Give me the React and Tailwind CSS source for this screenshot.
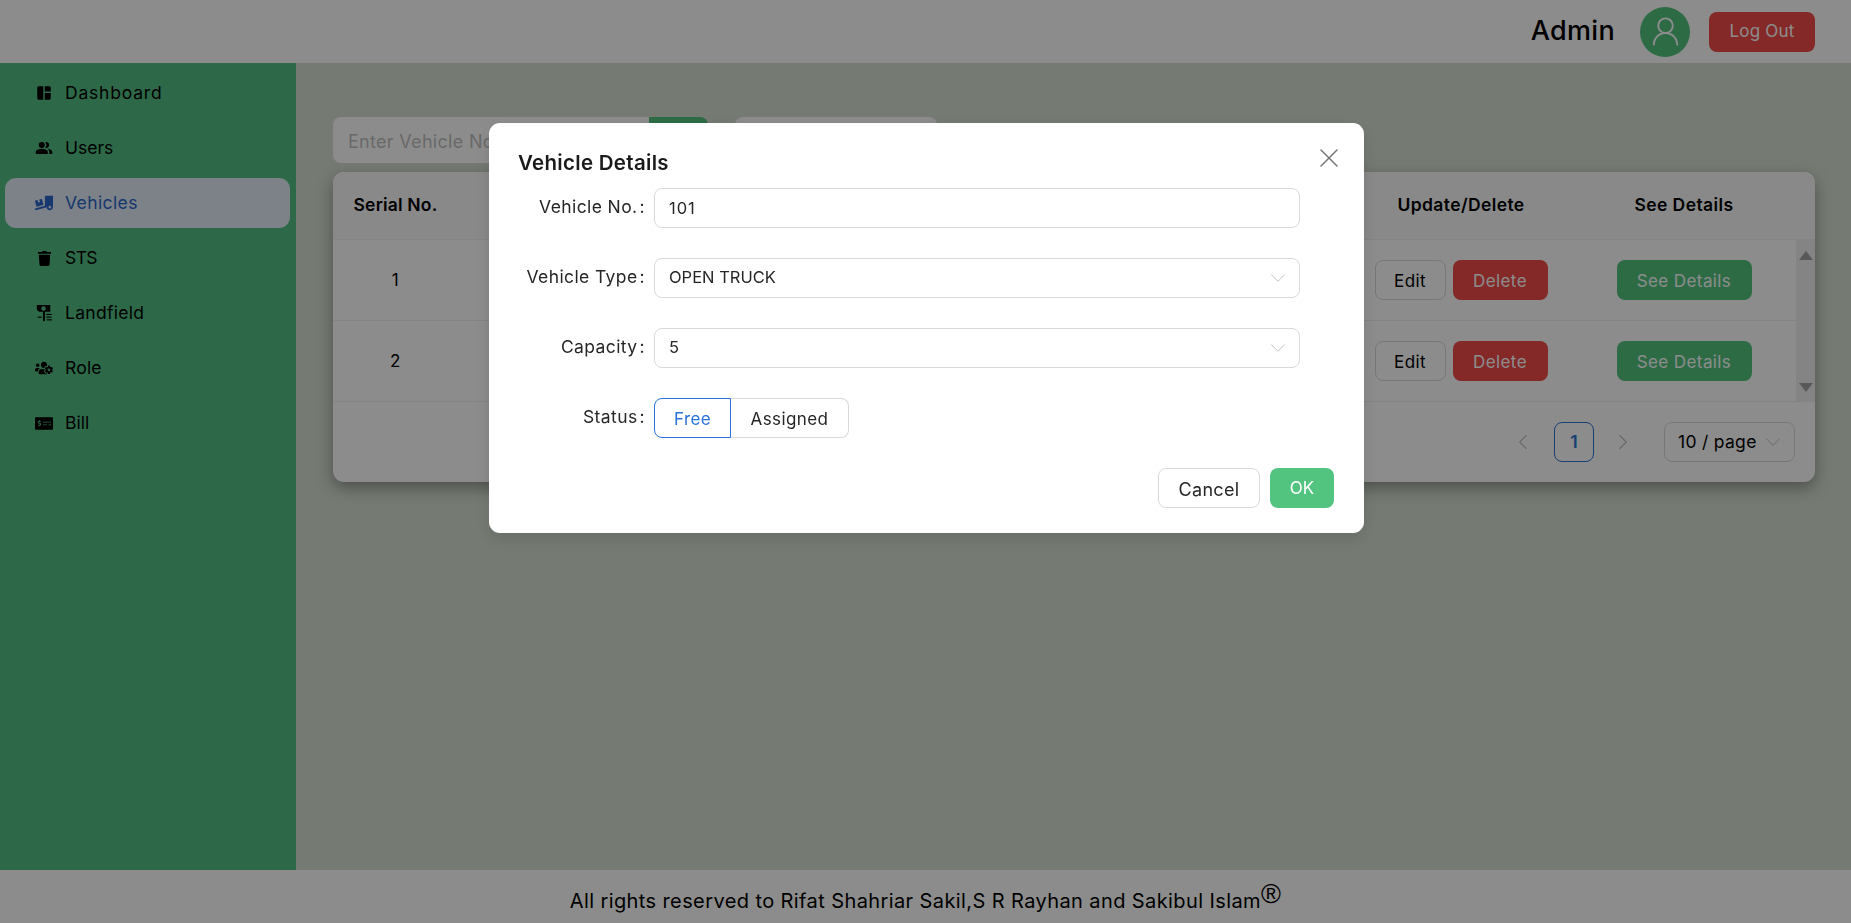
import { X, ChevronDown, ChevronLeft, ChevronRight, UserRound } from 'lucide-react';
import { MdSpaceDashboard, MdPeopleAlt } from 'react-icons/md';
import { FaTruckLoading, FaTrash, FaUsersCog, FaMoneyCheckAlt } from 'react-icons/fa';

const LandfieldIcon = ({ className }) => (
    <svg viewBox="0 0 20 20" className={className} fill="currentColor" fillRule="evenodd">
        <path d="M2 1h15v7.500h-6V11H9V8.500H4.500L2 6zM9.500 2.500a2.500 2.500 0 1 0 0.010 0z" />
        <rect x="9" y="11" width="2" height="8" />
        <rect x="12.500" y="11" width="6" height="1.200" />
        <rect x="12.500" y="14" width="6" height="1.200" />
        <rect x="13" y="17" width="6" height="1.200" />
        <rect x="3" y="14" width="4.500" height="1.200" />
    </svg>
);

const navItems = [
    { label: 'Dashboard', icon: MdSpaceDashboard, size: 'text-[20px]', tracking: 'tracking-[0.8px]' },
    { label: 'Users', icon: MdPeopleAlt, size: 'text-[20px]', tracking: 'tracking-[0px]' },
    { label: 'Vehicles', icon: FaTruckLoading, active: true, size: 'text-[18px]', tracking: 'tracking-[0.4px]' },
    { label: 'STS', icon: FaTrash, size: 'text-[15px]', tracking: 'tracking-[-0.6px]' },
    { label: 'Landfield', icon: LandfieldIcon, size: 'w-[18px] h-[18px]', tracking: 'tracking-[0.3px]' },
    { label: 'Role', icon: FaUsersCog, size: 'text-[18px]', tracking: 'tracking-[0.2px]' },
    { label: 'Bill', icon: FaMoneyCheckAlt, size: 'text-[19px]', tracking: 'tracking-[0px]' },
];

const Sidebar = () => (
    <aside className="w-[296px] shrink-0 bg-[#52bf83] pl-[5px] pr-[6px] pt-[5px]">
        <ul className="flex flex-col gap-[5px]">
            {navItems.map((item) => (
                <li
                    key={item.label}
                    className={`h-[50px] rounded-[11px] flex items-center pl-[30px] text-[17.5px] ${item.tracking} ${
                        item.active ? 'bg-[#e3ecf7] text-[#2a66c8]' : 'text-black'
                    }`}
                >
                    <span className="w-[30px] flex justify-start">
                        <span className="w-[18px] flex justify-center">
                            <item.icon className={item.size} />
                        </span>
                    </span>
                    {item.label}
                </li>
            ))}
        </ul>
    </aside>
);

const VehicleRow = ({ serial }) => (
    <div className="flex h-[81px] items-center border-b border-[#f0f0f0] text-[17px] tracking-[0.4px]">
        <div className="w-[125px] text-center pt-[2px]">{serial}</div>
        <div className="flex-1" />
        <div className="w-[222px] flex justify-center gap-[7px]">
            <button className="w-[71px] h-[40px] pt-[3px] rounded-[8px] border border-[#d9d9d9] bg-white">Edit</button>
            <button className="w-[95px] h-[40px] pt-[3px] rounded-[8px] bg-[#f04a4a] text-white">Delete</button>
        </div>
        <div className="w-[224px] flex justify-center">
            <button className="w-[135px] h-[40px] pt-[3px] rounded-[8px] bg-[#52c47f] text-white">See Details</button>
        </div>
    </div>
);

const VehicleTable = () => (
    <div className="h-[310px] rounded-[11px] bg-white shadow-[0_6px_16px_rgba(0,0,0,0.35)] overflow-hidden">
        <div className="flex h-[68px] items-center font-semibold text-[17.5px] tracking-[0.4px] bg-[#fafafa] border-b border-[#f0f0f0] pr-[19px]">
            <div className="w-[125px] text-center tracking-[0.2px]">Serial No.</div>
            <div className="flex-1" />
            <div className="w-[222px] text-center">Update/Delete</div>
            <div className="w-[224px] text-center">See Details</div>
        </div>
        <div className="flex h-[162px]">
            <div className="flex-1">
                <VehicleRow serial="1" />
                <VehicleRow serial="2" />
            </div>
            <div className="w-[19px] bg-[#f1f1f1] flex flex-col items-center justify-between pt-[11px] pb-[10px]">
                <span className="w-0 h-0 border-x-[7px] border-x-transparent border-b-[9px] border-b-[#a3a3a3]" />
                <span className="w-0 h-0 border-x-[7px] border-x-transparent border-t-[9px] border-t-[#a3a3a3]" />
            </div>
        </div>
        <div className="flex items-center justify-end h-[80px] pr-[20px] text-[17.5px] tracking-[0.3px]">
            <ChevronLeft className="w-[26px] h-[26px] text-[#bfbfbf] mr-[18px]" strokeWidth={1} />
            <div className="w-[40px] h-[40px] rounded-[8px] border border-[#2a72d8] text-[#2a72d8] font-semibold flex items-center justify-center">
                1
            </div>
            <ChevronRight className="w-[26px] h-[26px] text-[#bfbfbf] ml-[16px] mr-[28px]" strokeWidth={1} />
            <div className="w-[131px] h-[40px] rounded-[8px] border border-[#d9d9d9] flex items-center justify-between pl-[13px] pr-[8px]">
                10 / page
                <ChevronDown className="w-[26px] h-[26px] text-[#bfbfbf]" strokeWidth={0.9} />
            </div>
        </div>
    </div>
);

const FormRow = ({ label, children }) => (
    <div className="flex items-center h-[40px]">
        <label className="w-[127px] pb-[1px] text-right text-[17.5px] tracking-[0.4px] text-[#262626] shrink-0 whitespace-nowrap">
            {label}
            <span className="ml-[2px]">:</span>
        </label>
        <div className="ml-[9px] w-[646px]">{children}</div>
    </div>
);

const FieldBox = ({ value, arrow, tracking = '' }) => (
    <div
        className={`h-[40px] rounded-[8px] border border-[#d9d9d9] flex items-center justify-between pl-[14px] pr-[8px] text-[16.500px] text-[#262626] ${
            arrow ? 'pb-[2px]' : ''
        } ${tracking}`}
    >
        {value}
        {arrow && <ChevronDown className="w-[26px] h-[26px] mt-[2px] text-[#bfbfbf]" strokeWidth={0.9} />}
    </div>
);

const VehicleModal = () => (
    <div className="fixed inset-0 bg-black/45 flex justify-center items-start pt-[123px] pl-[2px]">
        <div className="relative w-[875px] h-[410px] bg-white rounded-[11px] pl-[29px] pt-[27px] shadow-[0_6px_16px_rgba(0,0,0,0.12)]">
            <button className="absolute top-[19px] right-[19px] text-[#737373]">
                <X className="w-[32px] h-[32px]" strokeWidth={1} />
            </button>
            <h2 className="text-[20.5px] leading-[26px] font-semibold tracking-[0.3px] text-[#1a1a1a]">Vehicle Details</h2>
            <div className="mt-[12px] flex flex-col gap-[30px]">
                <FormRow label="Vehicle No.">
                    <FieldBox value="101" tracking="tracking-[1px]" />
                </FormRow>
                <FormRow label="Vehicle Type">
                    <FieldBox value="OPEN TRUCK" arrow />
                </FormRow>
                <FormRow label="Capacity">
                    <FieldBox value="5" arrow />
                </FormRow>
                <FormRow label="Status">
                    <div className="flex h-[40px] text-[17px] tracking-[0.4px]">
                        <div className="w-[77px] pt-[3px] rounded-l-[8px] border border-[#2a72d8] text-[#2a72d8] flex items-center justify-center">
                            Free
                        </div>
                        <div className="w-[118px] pt-[3px] rounded-r-[8px] border border-l-0 border-[#d9d9d9] text-[#262626] flex items-center justify-center">
                            Assigned
                        </div>
                    </div>
                </FormRow>
            </div>
            <div className="mt-[30px] flex justify-end gap-[10px] pr-[30px]">
                <button className="w-[102px] h-[40px] pt-[2px] rounded-[8px] border border-[#d9d9d9] text-[18px] tracking-[0.3px] text-[#262626]">
                    Cancel
                </button>
                <button className="w-[64px] h-[40px] pt-[2px] rounded-[8px] bg-[#52c47f] text-[17px] text-white">OK</button>
            </div>
        </div>
    </div>
);

const App = () => {
    return (
        <div className="h-screen flex flex-col font-['Inter',sans-serif] text-black overflow-hidden">
            <header className="h-[63px] shrink-0 bg-white flex items-center justify-end pr-[36px]">
                <span className="text-[27px] tracking-[0.3px] font-medium mr-[25px]">Admin</span>
                <div className="w-[50px] h-[50px] rounded-full bg-[#52c47f] flex items-center justify-center text-white">
                    <UserRound className="w-[35px] h-[35px]" strokeWidth={1.3} />
                </div>
                <button className="ml-[19px] w-[106px] h-[40px] rounded-[8px] bg-[#f04a4a] text-white text-[17px] tracking-[0.2px]">
                    Log Out
                </button>
            </header>

            <div className="flex flex-1 min-h-0">
                <Sidebar />
                <main className="flex-1 bg-[#d5dfd0] pl-[37px] pr-[36px] pt-[54px]">
                    <div className="flex h-[46px] mb-[9px]">
                        <input
                            placeholder="Enter Vehicle No"
                            className="w-[316px] rounded-l-[8px] bg-white px-[15px] pt-[2px] text-[18px] tracking-[0.3px] placeholder:text-[#bfbfbf] outline-none"
                        />
                        <div className="w-[59px] rounded-r-[8px] bg-[#52c47f]" />
                        <div className="ml-[27px] w-[202px] rounded-[8px] bg-white" />
                    </div>
                    <VehicleTable />
                </main>
            </div>

            <footer className="h-[53px] shrink-0 bg-white flex items-center justify-center pt-[14px] text-[20px] tracking-[0.4px]">
                <span>
                    All rights reserved to Rifat Shahriar Sakil,S R Rayhan and Sakibul Islam
                    <sup className="font-['Liberation_Sans',sans-serif] text-[27px] leading-none align-[-9px]">®</sup>
                </span>
            </footer>

            <VehicleModal />
        </div>
    );
};

export default App;
